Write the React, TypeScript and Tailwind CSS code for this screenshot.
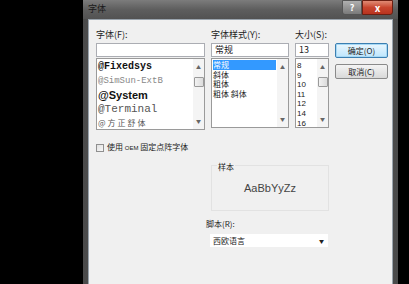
const ui = "font-['Noto_Sans_CJK_SC',sans-serif]";
const inputClass = "h-[14px] border border-[#abadb3] bg-white px-[3px] text-[9px] leading-[12px] text-[#222]";

function ScrollBar({ thumb }: { thumb?: boolean }) {
  return (
    <div className="flex w-[11px] flex-col items-center justify-between bg-[#f4f4f4] py-[2px] text-[5px] text-[#666]">
      <span>▲</span>
      <div className="flex w-full flex-1 flex-col items-center pt-[4px]">
        {thumb ? (
          <div className="h-[10px] w-[10px] rounded-[1px] border border-[#9a9a9a] bg-gradient-to-r from-[#f2f2f2] to-[#dcdcdc]" />
        ) : null}
      </div>
      <span>▼</span>
    </div>
  );
}

function Button({ label, focused }: { label: string; focused?: boolean }) {
  return (
    <div
      className={
        "flex h-[15px] w-[53px] items-center justify-center rounded-[2px] border text-[8px] text-[#222] " +
        (focused
          ? "border-[#3c7fb1] bg-gradient-to-b from-[#eaf6fd] to-[#bee6fd] shadow-[inset_0_0_0_1px_#a7d9f5]"
          : "border-[#8a8a8a] bg-gradient-to-b from-[#f4f4f4] to-[#d9d9d9]")
      }
    >
      {label}
    </div>
  );
}

export default function App() {
  return (
    <div className="h-[284px] w-[409px] overflow-hidden bg-black">
      <div className={"ml-[83px] flex h-[300px] w-[315px] flex-col " + ui}>
        {/* title bar */}
        <div className="flex h-[19px] items-start justify-between bg-gradient-to-b from-[#7c7c7c] via-[#5e5e5e] to-[#525252] pl-[5px]">
          <span className="pt-[3px] text-[9px] leading-[12px] text-[#1a1a1a]">字体</span>
          <div className="mr-[5px] flex h-[15px]">
            <div className="flex w-[20px] items-center justify-center rounded-bl-[3px] border border-[#555] bg-gradient-to-b from-[#b0b0b0] to-[#7a7a7a] text-[9px] font-bold text-white">
              ?
            </div>
            <div className="flex w-[31px] items-center justify-center rounded-br-[3px] border border-[#6b1f12] bg-gradient-to-b from-[#e08a74] via-[#c8452e] to-[#b8331f] text-[10px] font-bold text-white">
              x
            </div>
          </div>
        </div>

        <div className="flex flex-1 bg-gradient-to-r from-[#4a4a4a] via-[#626262] to-[#4a4a4a] px-[5px] pb-[1px]">
          <div className="flex-1 border border-[#9aa4ad] bg-[#f0f0f0] pl-[7px] pt-[9px]">
            {/* top grid */}
            <div className="grid grid-cols-[109px_78px_34px_53px] gap-x-[6px] text-[9px] leading-[12px] text-[#222]">
              <span>字体(F):</span>
              <span>字体样式(Y):</span>
              <span>大小(S):</span>
              <span />

              <div className={"mt-[2px] " + inputClass} />
              <div className={"mt-[2px] " + inputClass}>常规</div>
              <div className={"mt-[2px] " + inputClass}>13</div>
              <div className="mt-[2px]">
                <Button label="确定(O)" focused />
              </div>

              {/* font list */}
              <div className="flex h-[72px] border border-[#9a9a9a] bg-white">
                <div className="flex-1 pl-[1px] pt-[1px] font-['Liberation_Mono',monospace] text-[10px] leading-[14px]">
                  <div className="font-bold text-[#111]">@Fixedsys</div>
                  <div className="text-[9px] text-[#888]">@SimSun-ExtB</div>
                  <div className="font-['Liberation_Sans',sans-serif] text-[11px] font-bold text-[#111]">@System</div>
                  <div className="text-[11px] text-[#555]">@Terminal</div>
                  <div className={"text-[8px] tracking-[2px] text-[#555] " + ui}>@方正舒体</div>
                </div>
                <ScrollBar thumb />
              </div>

              {/* style list */}
              <div className="flex h-[70px] border border-[#9a9a9a] bg-white">
                <div className="flex-1 pl-[1px] pt-[1px] text-[8px] leading-[9.6px] text-[#222]">
                  <div className="w-[63px] bg-[#3399ff] text-white">常规</div>
                  <div>斜体</div>
                  <div>粗体</div>
                  <div>粗体 斜体</div>
                </div>
                <ScrollBar />
              </div>

              {/* size list */}
              <div className="flex h-[70px] border border-[#9a9a9a] bg-white">
                <div className="flex-1 pl-[1px] pt-[2px] font-['Liberation_Sans',sans-serif] text-[8px] leading-[9.6px] text-[#222]">
                  {["8", "9", "10", "11", "12", "14", "16"].map((s) => (
                    <div key={s}>{s}</div>
                  ))}
                </div>
                <ScrollBar thumb />
              </div>

              <div className="pt-[6px]">
                <Button label="取消(C)" />
              </div>
            </div>

            {/* OEM checkbox */}
            <div className="mt-[12px] flex items-center gap-[3px] text-[8px] leading-[10px] text-[#222]">
              <div className="h-[8px] w-[8px] border border-[#8f8f8f] bg-gradient-to-br from-[#e0e0e0] to-[#f8f8f8]" />
              <span>
                使用 <span className="font-['Liberation_Sans',sans-serif] text-[6px]">OEM</span> 固定点阵字体
              </span>
            </div>

            {/* sample */}
            <div className="ml-[115px] mt-[12px] w-[118px]">
              <div className="relative h-[46px] border border-[#e2e2e2]">
                <span className="absolute -top-[4px] left-[5px] bg-[#f0f0f0] px-[1px] text-[8px] leading-[10px] text-[#222]">
                  样本
                </span>
                <div className="flex h-full items-center justify-center pt-[1px] font-['Liberation_Sans',sans-serif] text-[11px] text-[#444]">
                  AaBbYyZz
                </div>
              </div>
            </div>

            {/* script */}
            <div className="ml-[110px] mt-[8px] text-[8px] leading-[10px] text-[#222]">脚本(R):</div>
            <div className="ml-[114px] mt-[5px] flex h-[13px] w-[118px] items-center justify-between bg-white pl-[3px] pr-[4px] text-[8px] text-[#222]">
              <span>西欧语言</span>
              <span className="text-[5px]">▼</span>
            </div>
          </div>
        </div>
      </div>
    </div>
  );
}
